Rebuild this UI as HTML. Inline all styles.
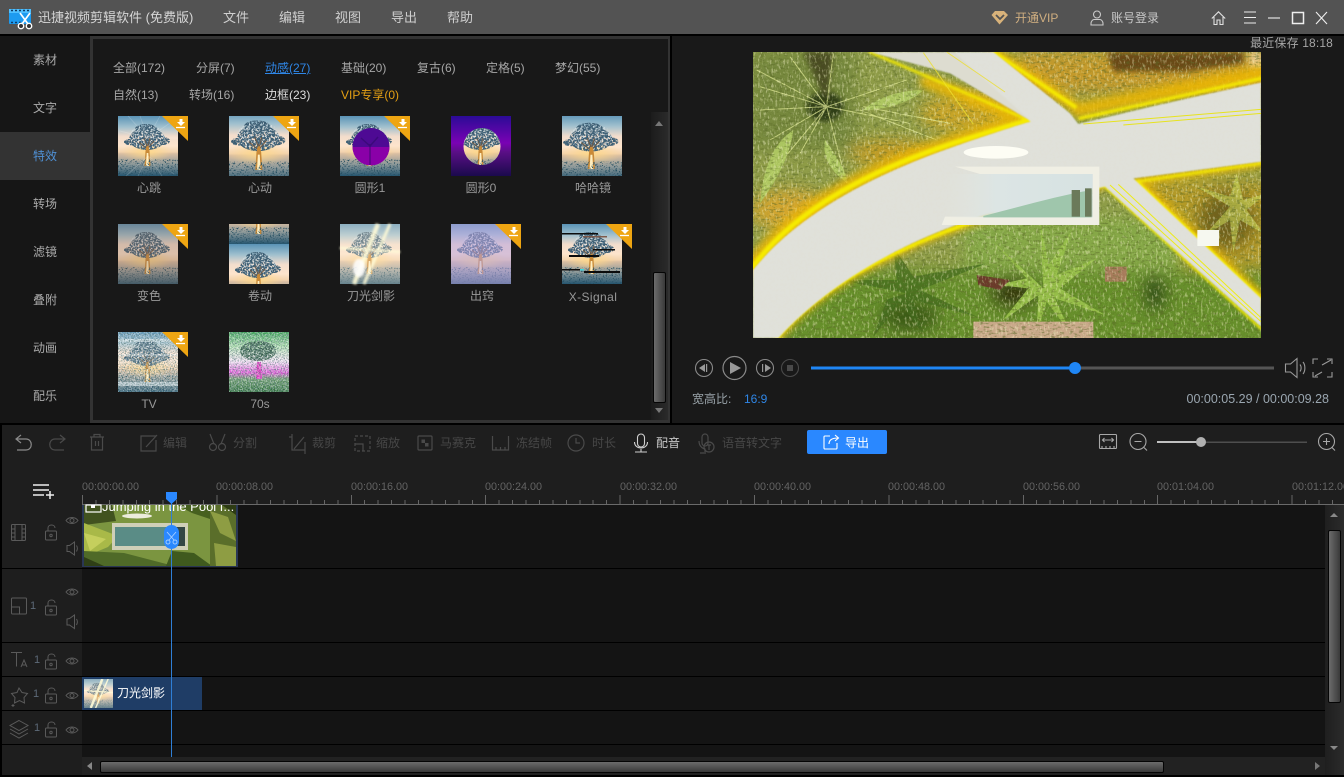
<!DOCTYPE html>
<html lang="zh"><head><meta charset="utf-8"><title>迅捷视频剪辑软件</title>
<style>
html,body{margin:0;padding:0;background:#000}
#a{position:relative;width:1344px;height:777px;overflow:hidden;background:#000;font:12px/16px "Liberation Sans","Noto Sans CJK SC",sans-serif;color:#aaa}
#a div,#a span.t,#a svg.p{position:absolute}
.t{position:absolute;white-space:nowrap}
.m{font-size:13px;color:#cfcfcf;top:10px}
.s{left:0;width:90px;text-align:center;color:#aaa}
.tb{color:#a6a6a6;top:60px}
.tb2{color:#a6a6a6;top:87px}
.l{color:#999;transform:translateX(-50%)}
.tool{color:#474747;top:435px}
.r{color:#636363;font-size:10.8px;top:479px}
svg.p{display:block;overflow:visible}
.ic{fill:none;stroke:#4a4a4a;stroke-width:1.2}
.ih{fill:none;stroke:#5a5a5a;stroke-width:1}
</style></head><body><div id="a">

<!-- title bar -->
<div style="left:0;top:0;width:1344px;height:34px;background:#535353"></div>
<svg class="p" style="left:9px;top:9px" width="24" height="21" viewBox="0 0 24 21">
<rect x="0" y="0" width="22" height="15" rx="1" fill="#1d9bf0"/><rect x="0" y="0" width="22" height="4" fill="#4fc0ff"/>
<path d="M2 1.500h2M6 1.500h2M10 1.500h2M14 1.500h2M18 1.500h2M2 13.500h2M6 13.500h2M10 13.500h2" stroke="#0d3b66" stroke-width="1.500"/>
<path d="M11 4l8 11M21 4l-8 11" stroke="#fff" stroke-width="1.700"/><circle cx="12" cy="17" r="2.700" fill="#333" stroke="#fff" stroke-width="1.400"/><circle cx="20" cy="17" r="2.700" fill="#333" stroke="#fff" stroke-width="1.400"/></svg>
<span class="t" style="left:38px;top:10px;font-size:13px;color:#d6d6d6">迅捷视频剪辑软件 (免费版)</span>
<span class="t m" style="left:223px">文件</span><span class="t m" style="left:279px">编辑</span><span class="t m" style="left:335px">视图</span><span class="t m" style="left:391px">导出</span><span class="t m" style="left:447px">帮助</span>
<svg class="p" style="left:991px;top:10px" width="18" height="15" viewBox="0 0 18 15"><path d="M4 1h9l4 4-8.500 9.500L.5 5z" fill="#d8b27a"/><path d="M5 5l4 4 4-4" fill="none" stroke="#535353" stroke-width="1.800"/></svg>
<span class="t" style="left:1015px;top:10px;font-size:12px;color:#cfae80">开通VIP</span>
<svg class="p" style="left:1090px;top:10px" width="14" height="16" viewBox="0 0 14 16" fill="none" stroke="#c8c8c8" stroke-width="1.100"><circle cx="7" cy="4.500" r="3.500"/><path d="M1 15v-1.500c0-2.500 2-4 3-4h6c1 0 3 1.500 3 4V15z"/></svg>
<span class="t" style="left:1111px;top:10px;color:#c8c8c8">账号登录</span>
<svg class="p" style="left:1211px;top:11px" width="15" height="14" viewBox="0 0 15 14" fill="none" stroke="#e0e0e0" stroke-width="1.100"><path d="M.8 7.500L7.500.8l6.700 6.700M3 6v7.500h3V9h3v4.500h3V6"/></svg>
<svg class="p" style="left:1244px;top:11px" width="90" height="14" viewBox="0 0 90 14" fill="none" stroke="#eee" stroke-width="1.100"><path d="M0 1h12M0 6.500h12M0 12h12"/><path d="M24 7h12"/><rect x="48.500" y="1.500" width="11" height="11" stroke-width="1.500"/><path d="M72 1l11 12M83 1L72 13"/></svg>

<!-- sidebar -->
<div style="left:0;top:36px;width:90px;height:387px;background:#161616"></div>
<div style="left:0;top:132px;width:90px;height:48px;background:#333"></div>
<span class="t s" style="top:52px">素材</span><span class="t s" style="top:100px">文字</span><span class="t s" style="top:148px;color:#4f90d4">特效</span><span class="t s" style="top:196px">转场</span><span class="t s" style="top:244px">滤镜</span><span class="t s" style="top:292px">叠附</span><span class="t s" style="top:340px">动画</span><span class="t s" style="top:388px">配乐</span>

<!-- effects panel -->
<div style="left:90px;top:36px;width:580px;height:387px;background:#333"></div>
<div style="left:93px;top:39px;width:575px;height:381px;background:#181818"></div>
<span class="t tb" style="left:113px">全部(172)</span><span class="t tb" style="left:196px">分屏(7)</span><span class="t tb" style="left:265px;color:#2f86e6;text-decoration:underline">动感(27)</span><span class="t tb" style="left:341px">基础(20)</span><span class="t tb" style="left:417px">复古(6)</span><span class="t tb" style="left:486px">定格(5)</span><span class="t tb" style="left:555px">梦幻(55)</span>
<span class="t tb2" style="left:113px">自然(13)</span><span class="t tb2" style="left:189px">转场(16)</span><span class="t tb2" style="left:265px;color:#dcdcdc">边框(23)</span><span class="t tb2" style="left:341px;color:#e49f14">VIP专享(0)</span>

<svg class="p" style="left:0;top:0" width="700" height="425" viewBox="0 0 700 425">
<defs>
<linearGradient id="sky" x1="0" y1="0" x2="0" y2="1"><stop offset="0" stop-color="#5a93b6"/><stop offset=".18" stop-color="#a0c0ce"/><stop offset=".34" stop-color="#f3ddcc"/><stop offset=".5" stop-color="#fde4cc"/><stop offset=".6" stop-color="#f2d2ae"/><stop offset=".63" stop-color="#d8bda2"/><stop offset=".8" stop-color="#8f9a9a"/><stop offset="1" stop-color="#265670"/></linearGradient>
<radialGradient id="gl"><stop offset="0" stop-color="#ffd98a" stop-opacity=".95"/><stop offset="1" stop-color="#ffd98a" stop-opacity="0"/></radialGradient>
<filter id="spk" x="-10%" y="-10%" width="120%" height="120%"><feTurbulence type="fractalNoise" baseFrequency=".55" numOctaves="2" seed="3" result="n"/><feColorMatrix in="n" values="0 0 0 0 0 0 0 0 0 0 0 0 0 0 0 0 0 0 7 -2.400" result="m"/><feComposite in="SourceGraphic" in2="m" operator="in"/></filter>
<filter id="spk2" x="-10%" y="-10%" width="120%" height="120%"><feTurbulence type="fractalNoise" baseFrequency=".7" numOctaves="2" seed="11" result="n"/><feColorMatrix in="n" values="0 0 0 0 0 0 0 0 0 0 0 0 0 0 0 0 0 0 7 -3.900" result="m"/><feComposite in="SourceGraphic" in2="m" operator="in"/></filter>
<filter id="nz" x="0" y="0" width="100%" height="100%"><feTurbulence type="fractalNoise" baseFrequency=".75" numOctaves="2" seed="8"/><feColorMatrix values="0 0 0 0 1 0 0 0 0 1 0 0 0 0 1 0 4 0 0 -1.600"/></filter>
<filter id="nd" x="0" y="0" width="100%" height="100%"><feTurbulence type="fractalNoise" baseFrequency=".8" numOctaves="2" seed="21"/><feColorMatrix values="0 0 0 0 .1 0 0 0 0 .2 0 0 0 0 .2 0 0 4 0 -1.900"/></filter>
<filter id="b1"><feGaussianBlur stdDeviation="1"/></filter>
<g id="tr">
<rect width="60" height="60" fill="url(#sky)"/>
<ellipse cx="29" cy="36" rx="26" ry="10" fill="url(#gl)"/>
<g filter="url(#spk)" fill="#3e5f74"><ellipse cx="29" cy="23" rx="18" ry="11"/><ellipse cx="13" cy="26" rx="7" ry="3.500"/><ellipse cx="45" cy="25" rx="7" ry="4"/><ellipse cx="28" cy="13" rx="11" ry="5"/></g>
<g filter="url(#spk2)"><ellipse cx="29" cy="21" rx="18" ry="12" fill="#d4e0e6"/></g>
<path d="M29 44V28M29 33l-8-7M29 33l7-8M29 30l-3-8M30 30l2-8" stroke="#6c5a48" stroke-width="1" fill="none"/>
<path d="M26.500 50l1-15 1-5h2l1 5 1 15z" fill="#c98a38"/>
<path d="M28 50l.7-13h1.600l.7 13z" fill="#ffefc0"/>
<g filter="url(#spk2)"><rect x="0" y="43" width="60" height="17" fill="#254f62"/></g>
</g>
<clipPath id="cc"><circle cx="31" cy="30.500" r="18.500"/></clipPath>
<clipPath id="r60"><rect width="60" height="60"/></clipPath>
<clipPath id="r20"><rect width="60" height="20"/></clipPath>
<clipPath id="r40"><rect y="20" width="60" height="40"/></clipPath>
<g id="bd"><path d="M44 0h26v25z" fill="#eea512"/><path d="M61.500 3h3v3h2.500l-4 4-4-4h2.500z" fill="#fff"/><path d="M58 11.500h9" stroke="#fff" stroke-width="1.300"/></g>
<linearGradient id="pg" x1="0" y1="0" x2="0" y2="1"><stop offset="0" stop-color="#2b0b96"/><stop offset=".45" stop-color="#7a02b4"/><stop offset=".6" stop-color="#5a0f86"/><stop offset="1" stop-color="#1a0a4c"/></linearGradient>
<linearGradient id="g70" x1="0" y1="0" x2="0" y2="1"><stop offset="0" stop-color="#35a050"/><stop offset=".25" stop-color="#b0e0b0"/><stop offset=".5" stop-color="#f8e0f8"/><stop offset=".68" stop-color="#e050d8"/><stop offset=".78" stop-color="#6a9a6a"/><stop offset="1" stop-color="#256a32"/></linearGradient>
</defs>

<!-- row 1 -->
<g transform="translate(118,116)"><use href="#tr"/><g stroke="#fff" stroke-width=".7" opacity=".2"><path d="M30 22L10 0M30 22L22 0M30 22L42 0M30 22L55 5M30 22L2 15M30 22L60 22M30 40L8 60M30 40L20 60M30 40L44 60M30 40L56 58"/></g><use href="#bd"/></g>
<g transform="translate(229,116)"><g clip-path="url(#r60)"><g transform="translate(-5,-5) scale(1.180)"><use href="#tr"/></g></g><use href="#bd"/></g>
<g transform="translate(340,116)"><use href="#tr"/><circle cx="31" cy="30.500" r="18.500" fill="#4e0a94"/><path d="M12.500 31a18.500 18.500 0 0 0 37 0z" fill="#8a00a8"/><path d="M30 49V28M30 30l-9-8M30 30l8-9" stroke="#2d0a66" stroke-width="1.500" fill="none" opacity=".55"/><use href="#bd"/></g>
<g transform="translate(451,116)"><rect width="60" height="60" fill="url(#pg)"/><g clip-path="url(#cc)"><use href="#tr"/></g></g>
<g transform="translate(562,116)"><g clip-path="url(#r60)"><g transform="translate(-6,-2) scale(1.200,1.100)"><use href="#tr"/></g></g></g>
<!-- row 2 -->
<g transform="translate(118,224)"><use href="#tr"/><rect width="60" height="60" fill="#8c6a5a" opacity=".3"/><use href="#bd"/></g>
<g transform="translate(229,224)"><g clip-path="url(#r20)"><use href="#tr" y="-40"/></g><g clip-path="url(#r40)"><use href="#tr" y="20"/></g></g>
<g transform="translate(340,224)"><use href="#tr"/><rect width="60" height="60" fill="#fff0d8" opacity=".3"/><g fill="none" stroke="#fffbd8" opacity=".9" filter="url(#b1)"><path d="M14 60L38 0" stroke-width="4.500"/><path d="M24 60L50 0" stroke-width="3"/><path d="M0 24L60 28" stroke-width="2.500"/></g><ellipse cx="19" cy="44" rx="6" ry="9" fill="#fff" opacity=".85" filter="url(#b1)"/></g>
<g transform="translate(451,224)"><use href="#tr"/><rect width="60" height="60" fill="#b8a4e0" opacity=".55"/><use href="#bd"/></g>
<g transform="translate(562,224)"><use href="#tr"/><g fill="#0c0c0c"><rect y="9" width="36" height="1.500"/><rect x="21" y="12" width="24" height="1.500" fill="#7d5a4c"/><rect x="31" y="25" width="22" height="1.500"/><rect x="7" y="31" width="30" height="2"/><rect y="45" width="20" height="1.500"/><rect x="22" y="47" width="36" height="2"/></g><rect x="18" y="45" width="4" height="1.500" fill="#3ad8e0"/><use href="#bd"/></g>
<!-- row 3 -->
<g transform="translate(118,332)"><use href="#tr"/><rect y="7" width="60" height="3" fill="#e8f0f4" opacity=".6"/><rect y="22" width="60" height="2" fill="#fff" opacity=".45"/><rect y="50" width="60" height="4" fill="#dde8ee" opacity=".7"/><rect width="60" height="60" filter="url(#nz)" opacity=".5"/><rect width="60" height="60" filter="url(#nd)" opacity=".8"/><use href="#bd"/></g>
<g transform="translate(229,332)"><rect width="60" height="60" fill="url(#g70)"/><g filter="url(#spk)" fill="#2f5a44"><ellipse cx="29" cy="19" rx="18" ry="10"/></g><path d="M27 47l1-17h4l1 17z" fill="#e030c0"/><rect width="60" height="60" filter="url(#nz)" opacity=".55"/><rect width="60" height="60" filter="url(#nd)" opacity=".8"/></g>
</svg>
<span class="t l" style="left:149px;top:180px">心跳</span><span class="t l" style="left:260px;top:180px">心动</span><span class="t l" style="left:370px;top:180px">圆形1</span><span class="t l" style="left:481px;top:180px">圆形0</span><span class="t l" style="left:593px;top:180px">哈哈镜</span>
<span class="t l" style="left:149px;top:288px">变色</span><span class="t l" style="left:260px;top:288px">卷动</span><span class="t l" style="left:371px;top:288px">刀光剑影</span><span class="t l" style="left:482px;top:288px">出窍</span><span class="t l" style="left:593px;top:289px;letter-spacing:.4px">X-Signal</span>
<span class="t l" style="left:149px;top:396px">TV</span><span class="t l" style="left:260px;top:396px">70s</span>
<!-- panel scrollbar -->
<div style="left:651px;top:112px;width:17px;height:308px;background:linear-gradient(90deg,#1c1c1c,#2a2a2a)"></div>
<svg class="p" style="left:651px;top:112px" width="17" height="308"><path d="M4 14l4-5 4 5z" fill="#777"/><path d="M4 296l4 5 4-5z" fill="#777"/></svg>
<div style="left:652.500px;top:272px;width:11px;height:129px;border:1px solid #050505;border-radius:2px;background:linear-gradient(90deg,#6c6c6c,#555 45%,#3a3a3a)"></div>

<!-- preview -->
<div style="left:672px;top:36px;width:672px;height:387px;background:#191919"></div>
<span class="t" style="right:11px;top:35px;color:#a6a6a6;letter-spacing:.15px">最近保存 18:18</span>
<svg class="p" style="left:750px;top:50px" width="520" height="290" viewBox="0 0 1560 870">
<defs>
<clipPath id="pv"><rect x="9" y="6" width="1524" height="858"/></clipPath>
<filter id="bl20" x="-20%" y="-20%" width="140%" height="140%"><feGaussianBlur stdDeviation="24"/></filter>
<filter id="bl8" x="-20%" y="-20%" width="140%" height="140%"><feGaussianBlur stdDeviation="8"/></filter>
<filter id="bl10" x="-20%" y="-20%" width="140%" height="140%"><feGaussianBlur stdDeviation="12"/></filter>
<filter id="bl3" x="-5%" y="-5%" width="110%" height="110%"><feGaussianBlur stdDeviation="4"/></filter>
<filter id="bl1" x="-2%" y="-2%" width="104%" height="104%"><feGaussianBlur stdDeviation="2"/></filter>
<filter id="tx" x="0" y="0" width="100%" height="100%"><feTurbulence type="fractalNoise" baseFrequency=".07 .17" numOctaves="3" seed="5"/><feColorMatrix values="0 0 0 0 .1 0 0 0 0 .14 0 0 0 0 .02 0 5 0 0 -2.600"/></filter>
<filter id="tl" x="0" y="0" width="100%" height="100%"><feTurbulence type="fractalNoise" baseFrequency=".17 .07" numOctaves="3" seed="15"/><feColorMatrix values="0 0 0 0 .95 0 0 0 0 .95 0 0 0 0 .6 0 5 0 0 -2.700"/></filter>
<filter id="tw" x="0" y="0" width="100%" height="100%"><feTurbulence type="fractalNoise" baseFrequency=".12" numOctaves="2" seed="9"/><feColorMatrix values="0 0 0 0 .75 0 0 0 0 .75 0 0 0 0 .65 0 3 0 0 -1.400"/></filter>
<linearGradient id="wf" x1="0" y1="0" x2="1" y2="0"><stop offset="0" stop-color="#e2e6e0" stop-opacity="0"/><stop offset=".35" stop-color="#dce5e4"/><stop offset="1" stop-color="#d6e2e2"/></linearGradient>
<clipPath id="wb"><path d="M9 660C130 510 330 385 640 280S830 225 845 218L610 6H730L960 190L985 222C1200 170 1380 130 1533 98V335L1150 385L1533 745V830L1065 410L880 450C600 505 280 650 85 864H9z"/></clipPath>
</defs>
<g clip-path="url(#pv)">
<rect x="9" y="6" width="1524" height="858" fill="#8f9c48"/>
<g filter="url(#bl20)">
<rect x="0" y="0" width="320" height="300" fill="#76883c"/>
<ellipse cx="120" cy="480" rx="120" ry="60" fill="#d2a52e"/>
<ellipse cx="650" cy="190" rx="140" ry="60" fill="#c8a428"/>
<ellipse cx="430" cy="310" rx="130" ry="40" fill="#c49c24"/>
<rect x="800" y="0" width="760" height="130" fill="#c49a2a"/>
<rect x="1180" y="390" width="380" height="260" fill="#b49a26"/>
<ellipse cx="1430" cy="510" rx="90" ry="90" fill="#72621e"/>
<rect x="640" y="500" width="660" height="170" fill="#86a846"/>
<rect x="100" y="660" width="1460" height="240" fill="#668f2a"/>
<ellipse cx="790" cy="730" rx="70" ry="45" fill="#33330f"/>
<ellipse cx="1215" cy="730" rx="35" ry="55" fill="#2c4616"/>
<ellipse cx="480" cy="800" rx="90" ry="50" fill="#3a5a18"/>
</g>
<g filter="url(#bl8)"><path d="M1070 6H1480V40L1300 65H1090z" fill="#6a4a16"/><ellipse cx="225" cy="170" rx="55" ry="45" fill="#2e3c14"/><path d="M160 6l70 150 20-150z" fill="#4a4c22"/><path d="M1500 6h33v50h-33z" fill="#e8c888"/></g>
<!-- fronds -->
<g fill="none" stroke="#e2ea96" stroke-width="3" opacity=".75"><path d="M230 170L20 60M230 170L30 180M230 170L120 20M230 170L250 10M230 170L40 400M230 170L290 400M230 170L480 220M230 170L470 90M230 170L150 310M230 170L30 110M230 170L60 270M330 180L560 270M340 170L600 220"/></g>
<g fill="#b4cf66" opacity=".85"><path d="M225 270c30 40 60 90 70 130-50-30-80-80-70-130z"/><path d="M130 240c-60 40-90 110-100 220 50-70 90-140 100-220z"/><path d="M340 180c40-40 120-60 180-60-40 40-120 60-180 60z"/></g>
<g fill="#95bd48"><path d="M880 715L870 505l26 140 70-105-46 135 120-50-110 90 135 80-150-50 50 110-75-100-30 100 5-120-110 80 80-100-95-10 90-20-100-110z"/></g>
<g fill="#416a1c" opacity=".7"><path d="M470 730L270 690l170 0 -10-100 60 90 220-40-200 80 170 80-190-50 30 100-70-90-80 100 40-110-200 60z"/></g>
<g fill="#cfe05e" opacity=".55"><path d="M1440 470l-100-60 100 30 20-70 20 80 70-20-60 50 50 70-70-40-20 100-10-100-80 50z"/></g>
<rect x="1065" y="650" width="65" height="45" fill="#a87c5c"/>
<path d="M680 675l100 15-30 30-65-15z" fill="#6b3a2a"/>
<path d="M670 815h360v49H670z" fill="#c9a98a"/>
<rect x="9" y="6" width="1524" height="858" filter="url(#tx)" opacity=".5"/>
<rect x="9" y="6" width="1524" height="858" filter="url(#tl)" opacity=".4"/>
<!-- gold glow then yellow edges -->
<g fill="none" stroke="#eeb800" stroke-linecap="round" filter="url(#bl10)" opacity=".85">
<path d="M9 650C120 500 320 370 640 270S830 218 840 212" stroke-width="55"/>
<path d="M80 864C250 660 600 510 1060 405" stroke-width="22"/>
<path d="M530 95L840 212" stroke-width="40"/>
<path d="M1160 395L1533 745" stroke-width="35"/>
<path d="M1160 395L1533 340" stroke-width="25"/>
<path d="M985 180L1533 70" stroke-width="45"/>
<path d="M730 6L975 170" stroke-width="35"/>
</g>
<g fill="none" stroke="#f6ec00" stroke-linecap="round" filter="url(#bl3)">
<path d="M9 650C120 500 320 370 640 270S830 218 840 212" stroke-width="16"/>
<path d="M80 864C250 660 600 510 1060 405" stroke-width="12"/>
<path d="M360 6L840 212" stroke-width="8"/>
<path d="M1060 405L1533 835" stroke-width="8"/>
<path d="M1160 395L1533 745" stroke-width="12"/>
<path d="M1160 395L1533 340" stroke-width="8"/>
<path d="M990 205L1533 85" stroke-width="10"/>
<path d="M730 6L975 170" stroke-width="12"/>
</g>
<!-- white bands -->
<g filter="url(#bl1)">
<path d="M9 660C130 510 330 385 640 280S830 225 845 218L610 6H730L960 190L985 222C1200 170 1380 130 1533 98V335L1150 385L1533 745V830L1065 410L880 450C600 505 280 650 85 864H9z" fill="#e0e1da"/>
<path d="M360 6H610L845 215L600 70z" fill="#dddcd0"/>
</g>
<g clip-path="url(#wb)"><rect x="9" y="6" width="1524" height="858" filter="url(#tw)" opacity=".28"/></g>
<path d="M1080 405l453 410M1105 403l428 400" fill="none" stroke="#eceb1a" stroke-width="3"/>
<path d="M1000 222L1533 178M1120 225L1533 190" fill="none" stroke="#e7e31e" stroke-width="3"/>
<path d="M520 8l150 215M590 6l175 120" fill="none" stroke="#ecdf30" stroke-width="3" opacity=".8"/>
<!-- pool -->
<path d="M615 350H1048V525H575L585 500H1028V372H690z" fill="#f0efe4"/>
<path d="M590 372H1028V502H585z" fill="url(#wf)"/>
<path d="M700 498C810 470 920 438 1025 420V502H700z" fill="#9fc6ac"/>
<rect x="965" y="420" width="25" height="80" fill="#6b7a5a"/><rect x="1005" y="415" width="20" height="85" fill="#6b7a5a"/>
<ellipse cx="738" cy="307" rx="97" ry="19" fill="#fdfdf4"/>
<rect x="1342" y="540" width="65" height="48" fill="#f6f8f0"/>
</g></svg>

<!-- player controls -->
<svg class="p" style="left:690px;top:352px" width="650" height="32" viewBox="0 0 650 32">
<g fill="none" stroke="#8a8a8a" stroke-width="1.100"><circle cx="14" cy="16" r="8.500"/><circle cx="44.500" cy="16" r="11.500" stroke-width="1.200"/><circle cx="75" cy="16" r="8.500"/><circle cx="100" cy="16" r="8.500" stroke="#4a4a4a"/></g>
<path d="M15 12v8l-6-4zM16 12h1.200v8H16z" fill="#999"/><path d="M40 10l11 6-11 6z" fill="#999"/><path d="M72 12h1.200v8H72zM75 12l6 4-6 4z" fill="#999"/><rect x="97" y="13" width="6" height="6" fill="#4a4a4a"/>
<rect x="121" y="14.500" width="463" height="3" fill="#555"/><rect x="121" y="14.500" width="264" height="3" fill="#1f86f5"/><circle cx="385" cy="16" r="6" fill="#1f86f5"/>
<g fill="none" stroke="#9a9a9a" stroke-width="1.100"><path d="M595.500 12v8h5l6.500 5.500V6.500L600.500 12zM610 12.500c1.500 2 1.500 5 0 7M613 10c2.500 3 2.500 9 0 12"/><path d="M623 12V7h5M637 7h5v5M642 20v5h-5M628 25h-5v-5M632 13l9-5M632 20l-7 4" /></g></svg>
<span class="t" style="left:692px;top:391px;color:#9aa4aa">宽高比:</span><span class="t" style="left:744px;top:391px;color:#2f86e6">16:9</span>
<span class="t" style="right:15px;top:391px;color:#9aa6b0;font-size:12.5px">00:00:05.29 / 00:00:09.28</span>

<!-- toolbar -->
<div style="left:2px;top:425px;width:1342px;height:80px;background:#1e1e1e"></div>
<svg class="p" style="left:0;top:425px" width="1344" height="40" viewBox="0 0 1344 40">
<g fill="none" stroke-width="1.200" stroke="#8a8a8a"><path d="M16 14h10c7 0 7 11 0 11h-9M21 10l-5 4 5 4"/></g>
<g class="ic"><path d="M65 14H55c-7 0-7 11 0 11h9M60 10l5 4-5 4"/><path d="M90 12h14M94 12V9.500h6V12M91.500 12v13h11V12M95.500 16v5M98.500 16v5"/>
<path d="M156 11h-15v15h15V15M146 22l11-12"/>
<circle cx="213" cy="22" r="3.500"/><circle cx="222" cy="22" r="3.500"/><path d="M214 19l-4-10M221 19l4-10"/>
<path d="M289 12h3m0-3v16h13M305 17v12M304 12l-10 12"/>
<path stroke-dasharray="3 2" d="M355 11h15v15h-15z"/><path d="M355 19h8v7"/>
<rect x="418" y="11" width="14" height="14" rx="1"/></g>
<path d="M421.500 14.500h3.500v3.500h-3.500zM425 18h3.500v3.500H425z" fill="#4a4a4a"/>
<g class="ic"><path d="M492.500 11v14h16V11M496 25v-3M500.500 25v-3M505 25v-3"/>
<circle cx="576" cy="18" r="8"/><path d="M576 13v5h4"/></g>
<g fill="none" stroke="#cfcfcf" stroke-width="1.100"><rect x="637.500" y="9" width="7" height="13" rx="3.500"/><path d="M634.500 17c0 8 13 8 13 0M641 24v2.500M635 27h12"/></g>
<g class="ic"><rect x="702" y="9" width="6" height="12" rx="3"/><path d="M699 16c0 7 6 8 6 8v3M700 28h6"/><circle cx="709" cy="22" r="5"/><path d="M707 20h4M709 20v5"/></g>
<g fill="none" stroke="#a8a8a8" stroke-width="1.100"><rect x="1099.500" y="9.500" width="17" height="14" rx="1"/><path d="M1103 15h10M1104.500 13l-2 2 2 2M1111.500 13l2 2-2 2M1102 23v-2M1106 23v-2M1110 23v-2M1114 23v-2"/><circle cx="1138" cy="16.500" r="8"/><path d="M1134.500 16.500h7M1144 22.500l3 3"/><circle cx="1326.500" cy="16.500" r="8"/><path d="M1323 16.500h7M1326.500 13v7M1332 22.500l3 3"/></g>
<rect x="1157" y="16.500" width="150" height="1.500" fill="#4e4e4e"/><rect x="1157" y="16" width="44" height="2" fill="#c0c0c0"/><circle cx="1201" cy="17" r="5" fill="#b0b0b0"/>
</svg>
<span class="t tool" style="left:163px">编辑</span><span class="t tool" style="left:233px">分割</span><span class="t tool" style="left:312px">裁剪</span><span class="t tool" style="left:376px">缩放</span><span class="t tool" style="left:440px">马赛克</span><span class="t tool" style="left:516px">冻结帧</span><span class="t tool" style="left:592px">时长</span><span class="t tool" style="left:656px;color:#c8c8c8">配音</span><span class="t tool" style="left:722px">语音转文字</span>
<div style="left:807px;top:430px;width:80px;height:24px;background:#2a88ff;border-radius:2px"></div>
<svg class="p" style="left:823px;top:434px" width="17" height="16" viewBox="0 0 17 16" fill="none" stroke="#fff" stroke-width="1.100"><path d="M7 2H2a1 1 0 0 0-1 1v11a1 1 0 0 0 1 1h11a1 1 0 0 0 1-1V9"/><path d="M6 10c0-4 3-6 9-6M12 1l3.500 3L12 7"/></svg>
<span class="t" style="left:845px;top:435px;color:#fff">导出</span>

<!-- ruler -->
<svg class="p" style="left:33px;top:483px" width="22" height="16" viewBox="0 0 22 16"><path d="M0 2h16M0 7h16M0 12h11M17 8v8M13 12h8" stroke="#eee" stroke-width="1.500" fill="none"/></svg>
<span class="t r" style="left:82px">00:00:00.00</span><span class="t r" style="left:216px">00:00:08.00</span><span class="t r" style="left:351px">00:00:16.00</span><span class="t r" style="left:485px">00:00:24.00</span><span class="t r" style="left:620px">00:00:32.00</span><span class="t r" style="left:754px">00:00:40.00</span><span class="t r" style="left:888px">00:00:48.00</span><span class="t r" style="left:1023px">00:00:56.00</span><span class="t r" style="left:1157px">00:01:04.00</span><span class="t r" style="left:1292px">00:01:12.00</span>
<div style="left:82px;top:495px;width:1262px;height:9px;background:repeating-linear-gradient(90deg,#666 0,#666 1px,transparent 1px,transparent 134.400px)"></div>
<div style="left:82px;top:500px;width:1262px;height:4px;background:repeating-linear-gradient(90deg,#666 0,#666 1px,transparent 1px,transparent 13.440px)"></div>
<div style="left:82px;top:504px;width:1262px;height:1px;background:#6a6a6a"></div>

<!-- track area -->
<div style="left:2px;top:505px;width:80px;height:270px;background:#1e1e1e"></div>
<div style="left:82px;top:505px;width:1243px;height:252px;background:#141414"></div>
<div style="left:2px;top:568px;width:1323px;height:1px;background:#000"></div>
<div style="left:2px;top:642px;width:1323px;height:1px;background:#000"></div>
<div style="left:2px;top:676px;width:1323px;height:1px;background:#000"></div>
<div style="left:2px;top:710px;width:1323px;height:1px;background:#000"></div>
<div style="left:2px;top:744px;width:1323px;height:1px;background:#000"></div>

<!-- video clip -->
<svg class="p" style="left:82px;top:505px" width="156" height="63" viewBox="0 0 156 63">
<rect width="156" height="62" fill="#2a3754"/>
<rect x="2" y="0" width="152" height="61" fill="#7b9540"/>
<path d="M2 0h28L34 16 2 20z" fill="#41521f"/>
<path d="M2 18L36 31 26 42 2 52z" fill="#a9b948"/><path d="M2 28L24 34 8 46z" fill="#d2d866" opacity=".7"/>
<path d="M2 46l40 2 50 13H2z" fill="#4f6a28"/><path d="M2 52l20 9H2z" fill="#2f3f16"/>
<path d="M90 46l22 2 18 13h-46z" fill="#3f5a1e"/>
<rect x="128" y="0" width="26" height="61" fill="#5a6e2a"/>
<path d="M128 6l18 6 8 24-16-8zM132 38l22 4v19h-20z" fill="#98a648" opacity=".85"/><path d="M140 0h14v10z" fill="#2e3c14"/>
<path d="M95 0h33v14L110 8z" fill="#46601f"/>
<rect x="30" y="18" width="76" height="27" fill="#cfcfb8"/><rect x="33" y="22" width="70" height="19" fill="#5a8c86"/><rect x="94" y="22" width="9" height="19" fill="#334644"/>
<ellipse cx="55" cy="11" rx="15" ry="2.500" fill="#ececdc"/>
<rect x="4" y="0" width="15" height="7" fill="none" stroke="#fff" stroke-width="1.200"/><rect x="9" y="0" width="4" height="3" fill="#fff"/>
</svg>
<div style="left:82px;top:505px;width:156px;height:10px;overflow:hidden"><span class="t" style="left:20px;top:-6px;color:#fff;font-size:13px">Jumping in the Pool f...</span></div>

<!-- track headers -->
<svg class="p" style="left:0;top:505px" width="82" height="272" viewBox="0 0 82 272">
<g class="ih">
<rect x="11.500" y="19.500" width="14" height="16" rx="1"/><path d="M15 19.500v16M22 19.500v16M11.500 24h3.500M11.500 28h3.500M11.500 32h3.500M22 24h3.500M22 28h3.500M22 32h3.500"/>
<rect x="45.500" y="26" width="11" height="9" rx="1"/><path d="M48 26v-3c0-4 7-4 7 0"/><circle cx="51" cy="30.500" r="1.200"/>
<path d="M66 15.500c3-4 9-4 12 0-3 4-9 4-12 0z"/><circle cx="72" cy="15.500" r="2"/>
<path d="M67 40.500v6h2.500l5 3.500V37l-5 3.500zM76.500 40.500c1 1.500 1 4 0 6"/>
<rect x="11.500" y="93" width="15" height="16" rx="1"/><path d="M11.500 102h8v7"/>
<rect x="45.500" y="101" width="11" height="9" rx="1"/><path d="M48 101v-3c0-4 7-4 7 0"/><circle cx="51" cy="105.500" r="1.200"/>
<path d="M66 87c3-4 9-4 12 0-3 4-9 4-12 0z"/><circle cx="72" cy="87" r="2"/>
<path d="M67 114v6h2.500l5 3.500V110l-5 3.500zM76.500 114c1 1.500 1 4 0 6"/>
<path d="M11 147.500h11M16.500 147.500v14M21 162l3-7 3 7M22 160h4"/>
<rect x="45.500" y="155" width="11" height="9" rx="1"/><path d="M48 155v-3c0-4 7-4 7 0"/><circle cx="51" cy="159.500" r="1.200"/>
<path d="M66 156c3-4 9-4 12 0-3 4-9 4-12 0z"/><circle cx="72" cy="156" r="2"/>
<path d="M19 183l3 4.500 5.500 1-3.500 4 .5 5.500-5-2.500-5 2.500.5-5.500-3.500-4 5.500-1zM13 199v3M11.500 200.500h3"/>
<rect x="45.500" y="189" width="11" height="9" rx="1"/><path d="M48 189v-3c0-4 7-4 7 0"/><circle cx="51" cy="193.500" r="1.200"/>
<path d="M66 190.500c3-4 9-4 12 0-3 4-9 4-12 0z"/><circle cx="72" cy="190.500" r="2"/>
<path d="M19 215.500l9 5-9 5-9-5zM10 224l9 5 9-5M10 228l9 5 9-5"/>
<rect x="45.500" y="223" width="11" height="9" rx="1"/><path d="M48 223v-3c0-4 7-4 7 0"/><circle cx="51" cy="227.500" r="1.200"/>
<path d="M66 225c3-4 9-4 12 0-3 4-9 4-12 0z"/><circle cx="72" cy="225" r="2"/>
</g></svg>
<span class="t" style="left:30px;top:598px;color:#5d6a78;font-size:11px">1</span>
<span class="t" style="left:34px;top:652px;color:#5d6a78;font-size:11px">1</span>
<span class="t" style="left:33px;top:686px;color:#5d6a78;font-size:11px">1</span>
<span class="t" style="left:34px;top:720px;color:#5d6a78;font-size:11px">1</span>

<!-- effect clip -->
<div style="left:82px;top:677px;width:120px;height:33px;background:#1f3d66"></div>
<svg class="p" style="left:84px;top:679px;overflow:hidden" width="29" height="29" viewBox="0 0 60 60"><use href="#tr"/><rect width="60" height="60" fill="#fff0d8" opacity=".3"/><g fill="none" stroke="#fffbd8" opacity=".9"><path d="M14 60L38 0" stroke-width="5"/><path d="M24 60L50 0" stroke-width="3"/><path d="M0 24L60 28" stroke-width="2.500"/></g></svg>
<span class="t" style="left:117px;top:685px;color:#fff">刀光剑影</span>

<!-- playhead -->
<div style="left:171px;top:492px;width:1px;height:265px;background:#2f7fd6"></div>
<svg class="p" style="left:166px;top:492px" width="11" height="12" viewBox="0 0 11 12"><path d="M0 0h11v7l-5.500 5L0 7z" fill="#2a88ff"/></svg>
<svg class="p" style="left:163.500px;top:525px" width="15" height="24" viewBox="0 0 15 24"><rect width="15" height="24" rx="7.500" fill="#2a88ff"/><g fill="none" stroke="#a9cfff" stroke-width=".9"><path d="M3 7l7 8M12 7l-7 8"/><circle cx="4" cy="17" r="2"/><circle cx="11" cy="17" r="2"/></g></svg>

<!-- scrollbars -->
<div style="left:1325px;top:505px;width:19px;height:270px;background:linear-gradient(90deg,#1f1f1f,#2b2b2b)"></div>
<svg class="p" style="left:1325px;top:505px" width="19" height="252"><path d="M5 12l4-4 4 4z" fill="#888"/><path d="M5 241l4 4 4-4z" fill="#888"/></svg>
<div style="left:1327.500px;top:530px;width:11px;height:171px;border:1px solid #050505;border-radius:2px;background:linear-gradient(90deg,#6c6c6c,#555 45%,#3a3a3a)"></div>
<div style="left:82px;top:757px;width:1243px;height:18px;background:#222"></div>
<svg class="p" style="left:82px;top:757px" width="1243" height="18"><path d="M10 5v8l-5-4z" fill="#888"/><path d="M1233 5v8l5-4z" fill="#777"/></svg>
<div style="left:100px;top:761px;width:1062px;height:10px;border:1px solid #050505;border-radius:2px;background:linear-gradient(180deg,#6c6c6c,#555 45%,#3a3a3a)"></div>
<div style="left:0;top:775px;width:1344px;height:2px;background:#000"></div>
</div></body></html>
